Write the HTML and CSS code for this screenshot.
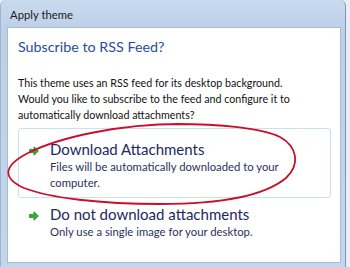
FILE: index.html
```html
<!DOCTYPE html>
<html>
<head>
<meta charset="utf-8">
<link rel="stylesheet" href="styles.css">
</head>
<body>
<div class="window">
  <div class="titlebar">Apply theme</div>
  <div class="content">
    <h1 class="instruction">Subscribe to RSS Feed?</h1>
    <p class="desc">This theme uses an RSS feed for its desktop background.<br>Would you like to subscribe to the feed and configure it to<br>automatically download attachments?</p>
    <div class="cmd cmd-hover">
      <svg class="arrow" width="10" height="10" viewBox="0 0 10 10"><path d="M5 0.8 L9.4 5 L5 9.2 L5 6.6 L0.6 6.6 L0.6 3.4 L5 3.4 Z" fill="#2fb52f" stroke="#1a7f1a" stroke-width="0.8" stroke-linejoin="round"/></svg>
      <div class="cmd-text">
        <div class="cmd-title">Download Attachments</div>
        <div class="cmd-sub">Files will be automatically downloaded to your<br>computer.</div>
      </div>
    </div>
    <div class="cmd">
      <svg class="arrow" width="10" height="10" viewBox="0 0 10 10"><path d="M5 0.8 L9.4 5 L5 9.2 L5 6.6 L0.6 6.6 L0.6 3.4 L5 3.4 Z" fill="#2fb52f" stroke="#1a7f1a" stroke-width="0.8" stroke-linejoin="round"/></svg>
      <div class="cmd-text">
        <div class="cmd-title">Do not download attachments</div>
        <div class="cmd-sub">Only use a single image for your desktop.</div>
      </div>
    </div>
  </div>
  <svg class="ellipse" width="350" height="267" viewBox="0 0 350 267"><path d="M175 124 C220 124 262 128 280 137 C298 147 300 165 286 178 C262 198 210 204 160 204 C100 204 50 198 24 188 C2 178 3 166 28 153 C60 137 120 124 180 124" fill="none" stroke="#c8102e" stroke-width="1.8"/></svg>
</div>
</body>
</html>
```
FILE: styles.css
```css
* { box-sizing: border-box; }
html, body { margin: 0; padding: 0; }
body {
  width: 350px;
  height: 267px;
  overflow: hidden;
  background: #e9eef5;
  font-family: Lato, "Open Sans", sans-serif;
}
.window {
  position: relative;
  width: 346px;
  height: 267px;
  background: linear-gradient(#c9daee, #bcd0e8 30px, #c3d6ec);
  border-left: 1px solid #9fb4cf;
  border-right: 1px solid #7f95b3;
  border-top-left-radius: 6px;
  border-top-right-radius: 6px;
  padding: 0 4px 4px 6px;
  display: flex;
  flex-direction: column;
}
.titlebar {
  height: 27px;
  padding: 8px 0 0 3px;
  font-size: 11.3px;
  color: #1b1b1b;
  flex: none;
}
.content {
  flex: 1;
  background: #fff;
  border: 1px solid #a8bbd3;
  padding: 8px 9px 0 10px;
}
.instruction {
  margin: 0;
  font-weight: normal;
  font-size: 14.3px;
  line-height: 22px;
  color: #2a4c9c;
}
.desc {
  margin: 17px 0 0;
  font-size: 10.7px;
  line-height: 16px;
  color: #111;
}
.cmd {
  display: flex;
  gap: 11px;
  padding: 10px 10px 6px 10px;
  border: 1px solid transparent;
  border-radius: 3px;
}
.cmd-hover {
  margin-top: 5px;
  border-color: #c6e2f0;
}
.arrow {
  flex: none;
  margin-top: 7px;
}
.cmd-title {
  font-size: 15px;
  line-height: 20px;
  color: #1e2860;
}
.cmd-sub {
  font-size: 11.3px;
  line-height: 16px;
  color: #2a3160;
}
.cmd + .cmd {
  padding-top: 5px;
}
.ellipse {
  position: absolute;
  left: -1px;
  top: 0;
  pointer-events: none;
}
```
